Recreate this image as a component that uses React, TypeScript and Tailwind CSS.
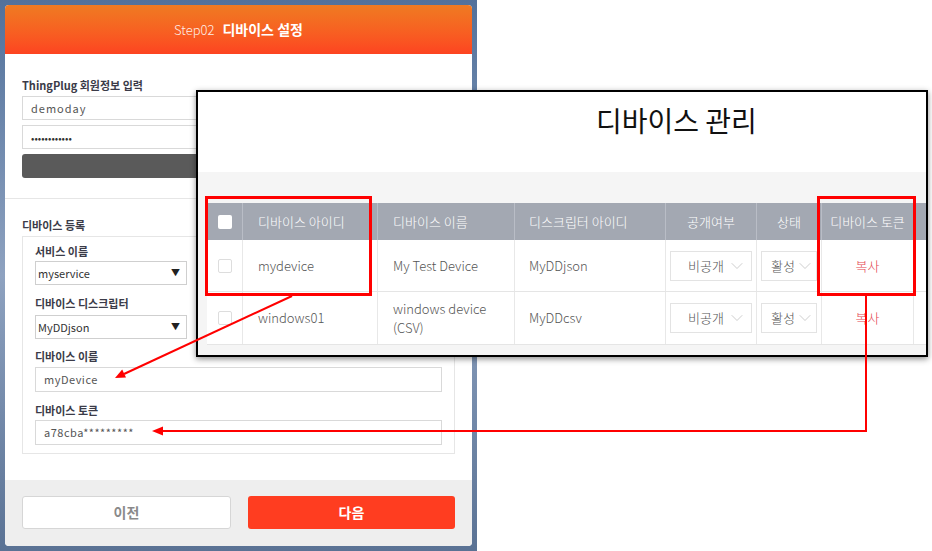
import React from "react";
import { ChevronDown } from "lucide-react";

const FONT = "font-['Noto_Sans_CJK_KR','Noto_Sans',sans-serif]";

function Label({ children, className = "" }: { children: React.ReactNode; className?: string }) {
  return (
    <div className={`h-[14px] text-[11px] leading-[14px] font-bold text-[#3b3b48] ${className}`}>{children}</div>
  );
}

function TextBox({ value, className = "", textClass = "" }: { value: string; className?: string; textClass?: string }) {
  return (
    <div
      className={`flex items-center border border-[#d9d9d9] bg-white pl-[8px] text-[11px] text-[#555] tracking-[0.5px] ${className}`}
    >
      <span className={textClass}>{value}</span>
    </div>
  );
}

function SelectBox({ value, className = "" }: { value: string; className?: string }) {
  return (
    <div
      className={`flex w-[152px] items-center justify-between border border-[#cfcfcf] bg-white pl-[2px] pr-[6px] text-[11px] text-[#333] ${className}`}
    >
      <span>{value}</span>
      <span className="text-[9px] text-[#222]">▼</span>
    </div>
  );
}

function LeftModal() {
  return (
    <div className="h-[551px] w-[477px] shrink-0 bg-gradient-to-b from-[#52719b] via-[#8ea2c0] to-[#5a7294] p-[5px]">
      <div className="flex h-full flex-col overflow-hidden rounded-[4px] bg-white">
        <div className="flex h-[49px] shrink-0 items-center justify-center gap-[8px] bg-gradient-to-b from-[#ef7a22] to-[#fd4321] text-white">
          <span className="text-[13px] font-light opacity-90">Step02</span>
          <span className="text-[14px] font-bold">디바이스 설정</span>
        </div>
        <div className="flex flex-1 flex-col px-[17px] pt-[24px]">
          <Label>ThingPlug 회원정보 입력</Label>
          <TextBox value="demoday" className="mt-[4px] h-[24px]" textClass="tracking-[1px]" />
          <TextBox value="••••••••••••" className="mt-[5px] h-[24px]" textClass="text-[10px] tracking-[0px] text-[#333]" />
          <div className="mt-[5px] h-[24px] rounded-[3px] bg-[#5a5a5a]" />
          <div className="-mx-[17px] mt-[20px] h-px bg-[#e6e6e6]" />
          <Label className="mt-[19px]">디바이스 등록</Label>
          <div className="mt-[4px] border border-[#e6e6e6] px-[12px] pb-[8px] pt-[7px]">
            <Label>서비스 이름</Label>
            <SelectBox value="myservice" className="mt-[3px] h-[24px]" />
            <Label className="mt-[11px]">디바이스 디스크립터</Label>
            <SelectBox value="MyDDjson" className="mt-[5px] h-[24px]" />
            <Label className="mt-[10px]">디바이스 이름</Label>
            <TextBox value="myDevice" className="mt-[4px] h-[25px]" />
            <Label className="mt-[11px]">디바이스 토큰</Label>
            <TextBox value="a78cba*********" className="mt-[3px] h-[25px]" />
          </div>
        </div>
        <div className="flex h-[66px] shrink-0 gap-[17px] bg-[#eeeeee] px-[17px] pt-[16px]">
          <div className="flex h-[33px] flex-1 items-center justify-center rounded-[3px] border border-[#d6d6d6] bg-white text-[14px] font-bold text-[#8a8a8a]">
            이전
          </div>
          <div className="flex h-[33px] flex-1 items-center justify-center rounded-[3px] bg-[#ff3d20] text-[14px] font-bold text-white">
            다음
          </div>
        </div>
      </div>
    </div>
  );
}

const COLS = "grid grid-cols-[35px_135px_137px_151px_91px_65px_92px_100px]";

function HeaderCell({ children, className = "" }: { children?: React.ReactNode; className?: string }) {
  return (
    <div className={`flex h-full items-center border-l border-[#b9bdc6] text-[13px] font-light text-white ${className}`}>
      {children}
    </div>
  );
}

function Cell({ children, className = "" }: { children?: React.ReactNode; className?: string }) {
  return (
    <div className={`flex h-full items-center border-l border-[#e8e8e8] text-[13px] font-light text-[#555] ${className}`}>
      {children}
    </div>
  );
}

function MiniSelect({ value, className = "" }: { value: string; className?: string }) {
  return (
    <div className={`flex h-[30px] items-center border border-[#e3e3e3] bg-white text-[13px] text-[#555] ${className}`}>
      <span>{value}</span>
      <ChevronDown className="ml-auto text-[#c4c4c4]" size={20} strokeWidth={1} />
    </div>
  );
}

function Row({ id, name, desc, h }: { id: string; name: React.ReactNode; desc: string; h: string }) {
  return (
    <div className={`${COLS} ${h} border-b border-[#e5e5e5] bg-white`}>
      <div className="flex h-full items-center justify-center">
        <div className="h-[14px] w-[14px] rounded-[2px] border border-[#dddddd] bg-white" />
      </div>
      <Cell className="pl-[15px]">{id}</Cell>
      <Cell className="pl-[15px] leading-[19px]">{name}</Cell>
      <Cell className="pl-[14px]">{desc}</Cell>
      <Cell className="px-[4px]">
        <MiniSelect value="비공개" className="w-full pl-[17px] pr-[4px]" />
      </Cell>
      <Cell className="px-[4px]">
        <MiniSelect value="활성" className="w-full pl-[9px] pr-[1px]" />
      </Cell>
      <Cell className="justify-center text-[#e4464f]">복사</Cell>
      <Cell />
    </div>
  );
}

function DevicePanel() {
  return (
    <div className="absolute left-[196px] top-[90px] flex h-[267px] w-[732px] flex-col border-2 border-black bg-white shadow-[0_2px_6px_rgba(0,0,0,0.45)]">
      <div className="h-[80px] shrink-0 pl-[398px] pt-[10px]">
        <div className="text-[28px] leading-[36px] text-[#111]">디바이스 관리</div>
      </div>
      <div className="flex-1 overflow-hidden bg-[#f5f5f5] pl-[9px] pt-[31px]">
        <div className="w-[806px]">
          <div className={`${COLS} h-[37px] bg-[#a3a8b2]`}>
            <div className="flex h-full items-center justify-center">
              <div className="h-[14px] w-[14px] rounded-[2px] bg-white" />
            </div>
            <HeaderCell className="pl-[15px]">디바이스 아이디</HeaderCell>
            <HeaderCell className="pl-[15px]">디바이스 이름</HeaderCell>
            <HeaderCell className="pl-[14px]">디스크립터 아이디</HeaderCell>
            <HeaderCell className="justify-center">공개여부</HeaderCell>
            <HeaderCell className="justify-center">상태</HeaderCell>
            <HeaderCell className="justify-center">디바이스 토큰</HeaderCell>
            <HeaderCell />
          </div>
          <Row id="mydevice" name="My Test Device" desc="MyDDjson" h="h-[52px]" />
          <Row
            id="windows01"
            name={
              <div className="flex flex-col">
                <span>windows device</span>
                <span>(CSV)</span>
              </div>
            }
            desc="MyDDcsv"
            h="h-[53px]"
          />
        </div>
      </div>
    </div>
  );
}

function Annotations() {
  return (
    <svg className="pointer-events-none absolute left-0 top-0" width={932} height={551} viewBox="0 0 932 551">
      <rect x={206.5} y={197.5} width={164} height={97} fill="none" stroke="#ff0000" strokeWidth={3} />
      <rect x={818.5} y={197.5} width={96} height={97} fill="none" stroke="#ff0000" strokeWidth={3} />
      <line x1={292} y1={296} x2={124} y2={374} stroke="#ff0000" strokeWidth={2} />
      <polygon points="115,378 126,377.6 122.2,369.6" fill="#ff0000" />
      <polyline points="866,296 866,431 162,431" fill="none" stroke="#ff0000" strokeWidth={2} />
      <polygon points="152,431 163,426.5 163,435.5" fill="#ff0000" />
    </svg>
  );
}

export default function App() {
  return (
    <div className={`relative h-[551px] w-[932px] overflow-hidden bg-white ${FONT}`}>
      <LeftModal />
      <DevicePanel />
      <Annotations />
    </div>
  );
}
